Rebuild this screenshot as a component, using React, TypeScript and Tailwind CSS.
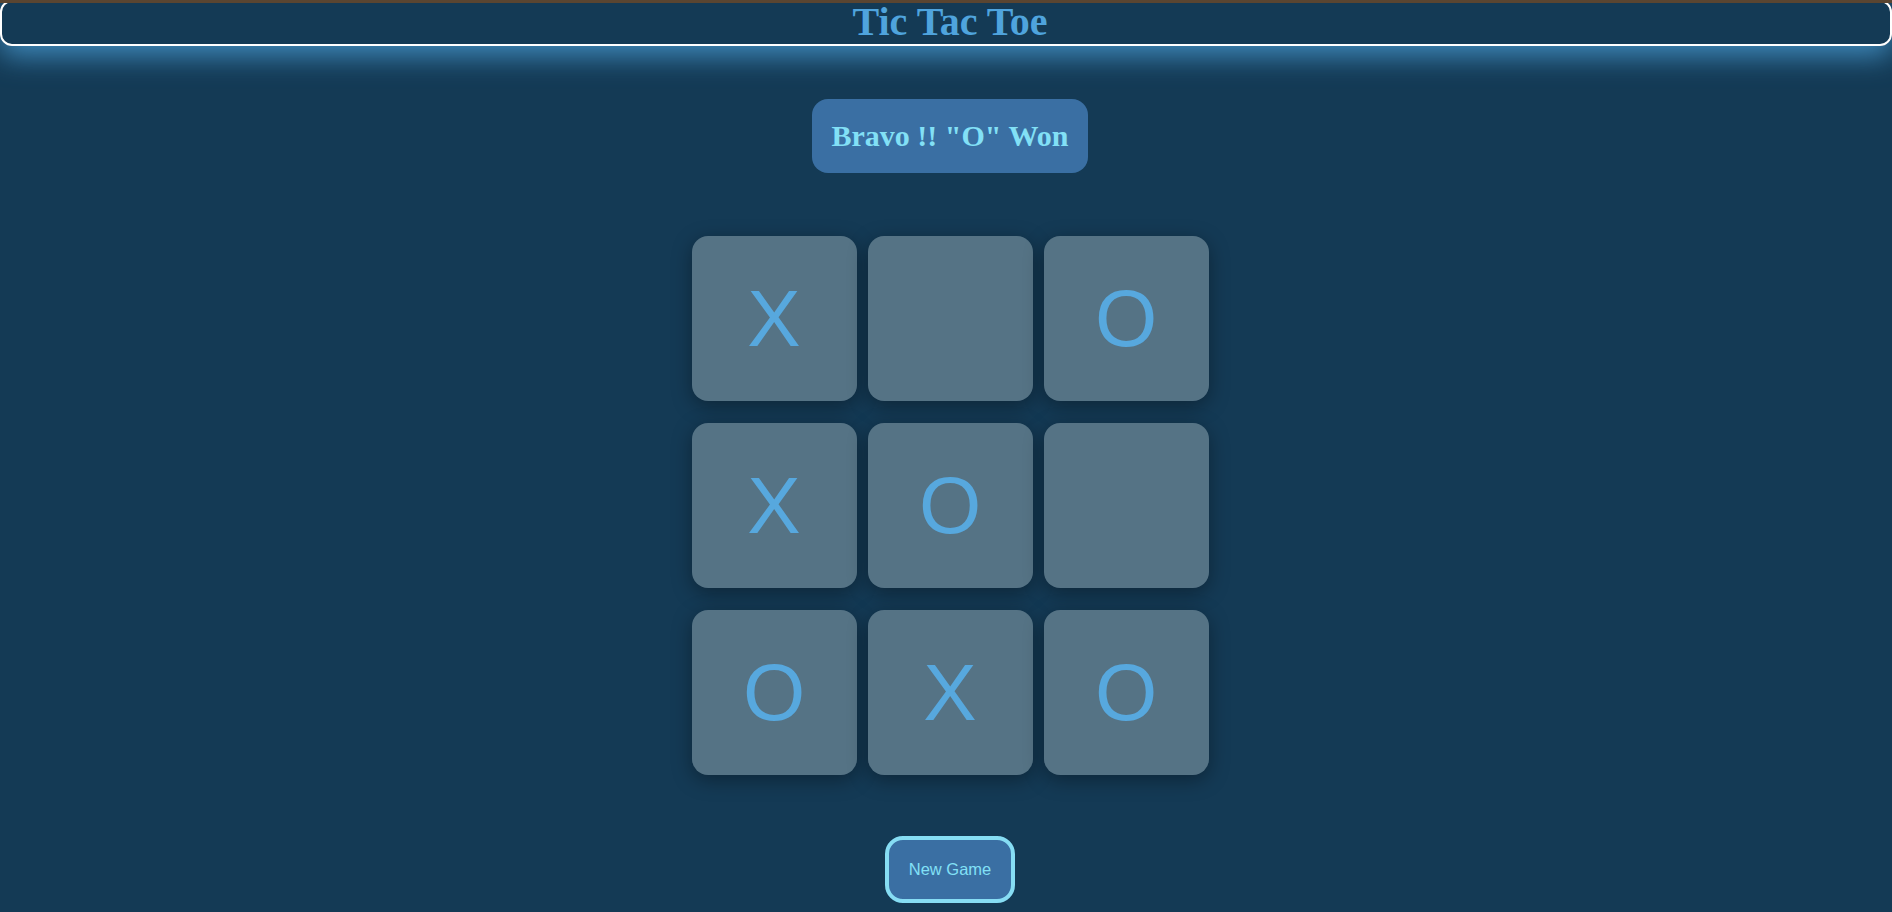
import { useState } from "react";

type Mark = "X" | "O" | "";

export default function App() {
  const [board] = useState<Mark[]>(["X", "", "O", "X", "O", "", "O", "X", "O"]);

  return (
    <div className="relative min-h-screen w-full overflow-hidden bg-[#143a55]">
      {/* thin strip at the very top */}
      <div className="absolute inset-x-0 top-0 z-10 h-[3px] bg-[#5a4531]" />

      {/* Header */}
      <header className="flex h-[46px] w-full justify-center rounded-xl border-2 border-white pl-2 shadow-[0_10px_28px_rgba(70,150,205,0.85)]">
        <h1 className="font-['Liberation_Serif',serif] text-[40px] font-bold leading-[39px] text-[#4fa4dd]">
          Tic Tac Toe
        </h1>
      </header>

      <main className="flex flex-col items-center pl-2">
        {/* Status */}
        <div className="mt-[53px] rounded-2xl bg-[#3a6fa3] px-5 py-5">
          <p className="font-['Liberation_Serif',serif] text-[30px] font-bold leading-[34px] text-[#82e0f6]">
            Bravo !! "O" Won
          </p>
        </div>

        {/* Board */}
        <div className="mt-[63px] grid grid-cols-[165px_165px_165px] gap-x-[11px] gap-y-[22px]">
          {board.map((cell, i) => (
            <div
              key={i}
              className="flex h-[165px] w-[165px] items-center justify-center rounded-2xl bg-[#557385] shadow-[0_5px_20px_rgba(0,0,0,0.35)]"
            >
              <span className="font-['Liberation_Sans',sans-serif] text-[80px] leading-none text-[#57a8de]">
                {cell}
              </span>
            </div>
          ))}
        </div>

        {/* Reset */}
        <button className="mt-[61px] rounded-[18px] border-4 border-[#86ddf4] bg-[#3a6fa3] px-5 py-5 font-['Liberation_Sans',sans-serif] text-[16.5px] leading-[19px] text-[#82e0f6]">
          New Game
        </button>
      </main>
    </div>
  );
}
